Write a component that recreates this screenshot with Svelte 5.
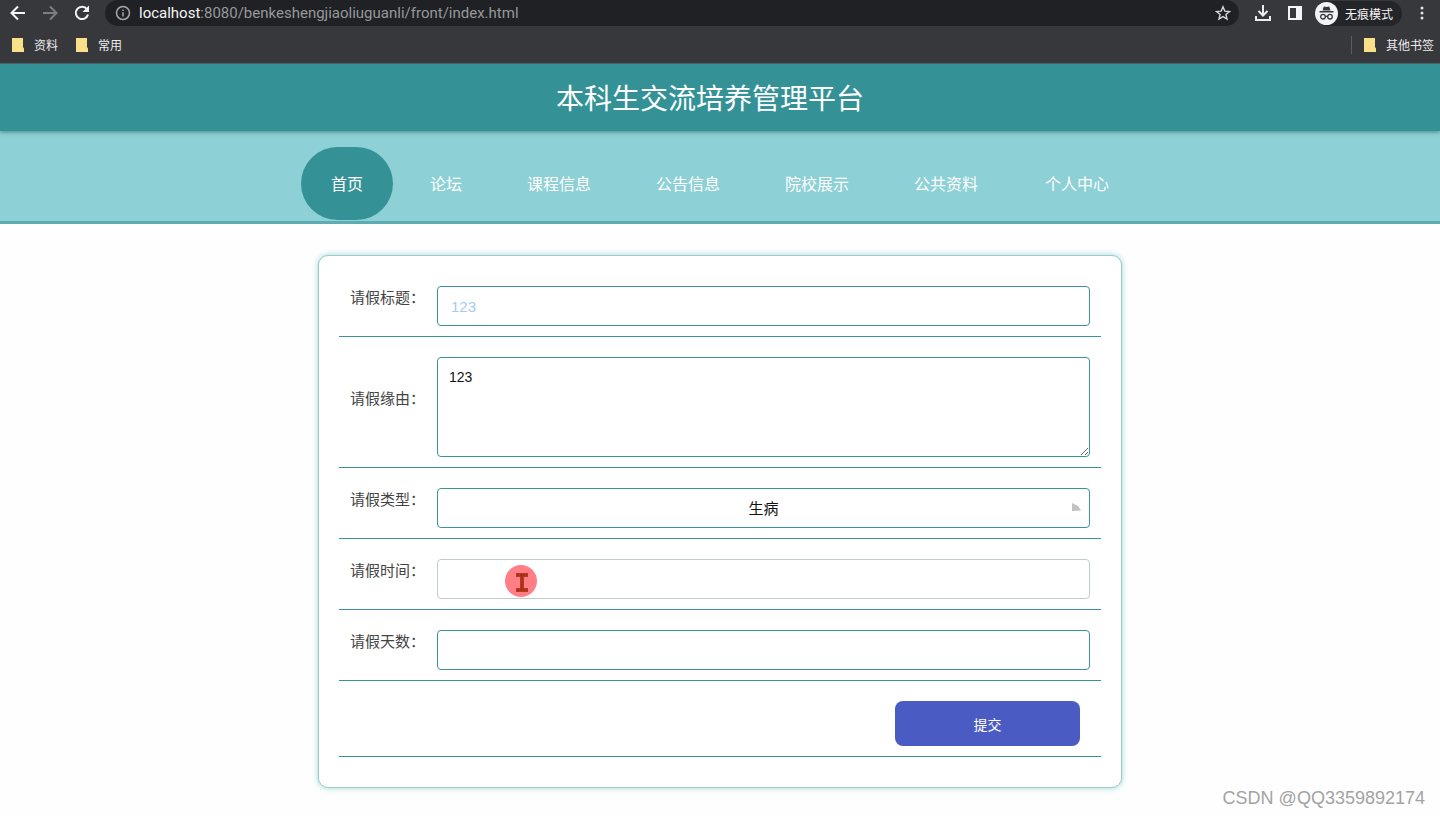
<script lang="ts">
    const menu = [
        { name: '首页', href: '#index' },
        { name: '论坛', href: '#forum' },
        { name: '课程信息', href: '#kecheng' },
        { name: '公告信息', href: '#gonggao' },
        { name: '院校展示', href: '#yuanxiao' },
        { name: '公共资料', href: '#ziliao' },
        { name: '个人中心', href: '#center' }
    ];

    let active = $state('首页');
    let biaoti = $state('123');
    let yuanyou = $state('123');
    let leixing = $state('生病');
    let shijian = $state('');
    let tianshu = $state('');

    function submitForm(event: Event) {
        event.preventDefault();
        console.log({ biaoti, yuanyou, leixing, shijian, tianshu });
    }
</script>

{#snippet folder()}
    <svg class="folder" width="12" height="14" viewBox="0 0 12 14">
        <path d="M0 0H11V9L12 10.500V14H0Z" fill="#fbe08a" />
    </svg>
{/snippet}

<div id="page">
    <div class="toolbar">
        <button class="tool" aria-label="back">
            <svg width="18" height="18" viewBox="0 0 18 18" fill="none" stroke="#f4f5f6" stroke-width="2">
                <path d="M16 9H3M9 2.500L2.500 9L9 15.500" />
            </svg>
        </button>
        <button class="tool" aria-label="forward">
            <svg width="18" height="18" viewBox="0 0 18 18" fill="none" stroke="#7d7e81" stroke-width="2">
                <path d="M2 9H15M9 2.500L15.500 9L9 15.500" />
            </svg>
        </button>
        <button class="tool" aria-label="reload">
            <svg width="18" height="18" viewBox="0 0 18 18">
                <path d="M14 5.200A6.200 6.200 0 1 0 15 10.500" fill="none" stroke="#f4f5f6" stroke-width="2" />
                <path d="M16 1.500V8H9.500Z" fill="#f4f5f6" />
            </svg>
        </button>
        <div class="address">
            <svg width="16" height="16" viewBox="0 0 16 16" fill="none" stroke="#a6a8ab" stroke-width="1.500">
                <circle cx="8" cy="8" r="6.500" />
                <path d="M8 7.200V11.500M8 4.400V6" />
            </svg>
            <span class="url"><b>localhost</b>:8080/benkeshengjiaoliuguanli/front/index.html</span>
            <button class="tool star" aria-label="bookmark">
                <svg width="16" height="16" viewBox="0 0 16 16" fill="none" stroke="#d5d6d8" stroke-width="1.400">
                    <path d="M8 1.800L9.800 6.100L14.500 6.500L10.900 9.500L12 14L8 11.600L4 14L5.100 9.500L1.500 6.500L6.200 6.100Z" />
                </svg>
            </button>
        </div>
        <button class="tool" aria-label="downloads">
            <svg width="18" height="18" viewBox="0 0 18 18" fill="none" stroke="#eceded" stroke-width="2">
                <path d="M9 1V11M4.500 7L9 11.500L13.500 7M2 12V16H16V12" />
            </svg>
        </button>
        <button class="tool" aria-label="side panel">
            <svg width="16" height="16" viewBox="0 0 16 16">
                <path d="M2 2H14V14H2Z" fill="none" stroke="#f4f5f6" stroke-width="2" />
                <path d="M9 2H14V14H9Z" fill="#f4f5f6" />
            </svg>
        </button>
        <button class="incognito">
            <svg width="23" height="23" viewBox="0 0 23 23">
                <circle cx="11.500" cy="11.500" r="11.500" fill="#f2f3f4" />
                <path d="M7.500 8.500L8.800 4.500L11.500 5.100L14.200 4.500L15.500 8.500ZM4.500 9H18.500V10.500H4.500Z" fill="#35363a" />
                <g fill="none" stroke="#35363a" stroke-width="1.300">
                    <circle cx="8" cy="14.700" r="2.300" />
                    <circle cx="15" cy="14.700" r="2.300" />
                    <path d="M10.300 14.300H12.700" />
                </g>
            </svg>
            无痕模式
        </button>
        <button class="tool" aria-label="menu">
            <svg width="16" height="16" viewBox="0 0 16 16" fill="#e2e3e5">
                <circle cx="8" cy="3" r="1.500" />
                <circle cx="8" cy="8" r="1.500" />
                <circle cx="8" cy="13" r="1.500" />
            </svg>
        </button>
    </div>
    <div class="bookmarks">
        <a href="#ziliao">{@render folder()}资料</a>
        <a href="#changyong">{@render folder()}常用</a>
        <a class="other" href="#other">{@render folder()}其他书签</a>
    </div>

    <header>
        <h1>本科生交流培养管理平台</h1>
    </header>

    <nav>
        {#each menu as item}
            <a href={item.href} class:active={active === item.name} onclick={() => (active = item.name)}>{item.name}</a>
        {/each}
    </nav>

    <form onsubmit={submitForm}>
        <div class="row">
            <label for="biaoti">请假标题：</label>
            <input id="biaoti" class="field title" type="text" bind:value={biaoti} />
        </div>
        <div class="row">
            <label for="yuanyou">请假缘由：</label>
            <textarea id="yuanyou" class="field" bind:value={yuanyou}></textarea>
        </div>
        <div class="row">
            <label for="leixing">请假类型：</label>
            <div class="wrap">
                <select id="leixing" class="field" bind:value={leixing}>
                    <option>生病</option>
                    <option>事假</option>
                </select>
                <svg class="arrow" width="9" height="8" viewBox="0 0 9 8">
                    <path d="M0 0L6 3L9 7.500L0 8Z" fill="#c3c0c3" />
                </svg>
            </div>
        </div>
        <div class="row">
            <label for="shijian">请假时间：</label>
            <div class="wrap">
                <input id="shijian" class="field time" type="text" bind:value={shijian} />
                <svg class="pointer" width="32" height="32" viewBox="0 0 32 32">
                    <circle cx="16" cy="16" r="16" fill="#ff7f84" />
                    <path d="M11 8H23V12H19V23H23V27H11V23H15V12H11Z" fill="#b8391f" />
                    <path d="M12 10H22M12 25H22M17 10V25" stroke="#8a2a16" stroke-width="1" stroke-dasharray="2 1" />
                </svg>
            </div>
        </div>
        <div class="row">
            <label for="tianshu">请假天数：</label>
            <input id="tianshu" class="field" type="text" bind:value={tianshu} />
        </div>
        <div class="row buttons">
            <button class="submit" type="submit">提交</button>
        </div>
    </form>

    <div class="watermark">CSDN @QQ3359892174</div>
</div>

<style>
    :global(body) {
        margin: 0;
    }

    #page {
        position: relative;
        box-sizing: border-box;
        min-height: 100vh;
        padding-bottom: 28px;
        background: #fefefe;
        font-family: "Noto Sans CJK SC", sans-serif;
    }

    button {
        border: none;
        background: none;
        padding: 0;
        font-family: inherit;
        cursor: pointer;
    }

    a {
        text-decoration: none;
    }

    svg {
        display: block;
        flex: none;
    }

    .toolbar {
        display: flex;
        align-items: center;
        height: 26px;
        padding: 0 2px;
        background: #37383b;
    }

    .tool {
        display: flex;
        justify-content: center;
        width: 32px;
    }

    .address {
        flex: 1;
        display: flex;
        align-items: center;
        gap: 8px;
        height: 26px;
        margin: 0 8px 0 7px;
        padding-left: 10px;
        border-radius: 13px;
        background: #202124;
        color: #96989b;
        font-family: Roboto, "Open Sans", sans-serif;
        font-size: 15px;
        line-height: 24px;
        white-space: nowrap;
    }

    .url {
        flex: 1;
    }

    .url b {
        color: #f4f5f6;
        font-weight: normal;
    }

    .incognito {
        display: flex;
        align-items: center;
        gap: 7px;
        height: 25px;
        margin: 0 4px;
        padding-right: 9px;
        border-radius: 13px;
        background: #242528;
        color: #f4f5f6;
        font-size: 12px;
    }

    .bookmarks {
        display: flex;
        align-items: center;
        gap: 18px;
        height: 37px;
        padding: 0 6px 0 12px;
        background: #37383b;
        border-bottom: 1px solid #4c6467;
    }

    .bookmarks a {
        display: flex;
        align-items: center;
        gap: 10px;
        color: #eceded;
        font-size: 12px;
        line-height: 18px;
    }

    .bookmarks .other {
        margin-left: auto;
        padding-left: 12px;
        border-left: 1px solid #5c5d61;
    }

    header {
        position: relative;
        padding: 12px 20px 12px 0;
        background: #349297;
        box-shadow: 0 1px 4px rgba(40, 100, 100, 0.7);
    }

    h1 {
        margin: 0;
        color: #fff;
        font-size: 28px;
        font-weight: normal;
        line-height: 43px;
        text-align: center;
    }

    nav {
        display: flex;
        justify-content: center;
        gap: 5px;
        padding: 16px 0 1px;
        background: #8dd0d6;
        border-bottom: 3px solid #5fabb2;
    }

    nav a {
        padding: 0 30px;
        border-radius: 40px;
        color: #fff;
        font-size: 16px;
        line-height: 73px;
    }

    nav a:first-child {
        margin-right: 2px;
    }

    nav a:last-child {
        margin-left: 2px;
    }

    nav a.active {
        background: #349297;
    }

    form {
        box-sizing: border-box;
        max-width: 804px;
        margin: 31px auto 0;
        padding: 20px;
        border: 1px solid #98cdcd;
        border-radius: 10px;
        background: #fff;
        box-shadow: 0 0 6px #9fd6d6;
    }

    .row {
        display: flex;
        align-items: center;
        margin-bottom: 10px;
        padding: 10px 11px;
        border-bottom: 1px solid #3d9295;
    }

    label {
        width: 87px;
        padding-bottom: 18px;
        color: #444;
        font-size: 15px;
        line-height: 22px;
    }

    .wrap {
        position: relative;
        flex: 1;
        display: flex;
    }

    .field {
        flex: 1;
        box-sizing: border-box;
        min-width: 0;
        height: 40px;
        padding: 0 12px;
        border: 1px solid #3d9295;
        border-radius: 4px;
        background: #fff;
        color: #111;
        font-family: "Liberation Sans", "Noto Sans CJK SC", sans-serif;
        font-size: 14px;
        outline: none;
    }

    .title {
        padding: 0 13px;
        color: #a3cdee;
        font-size: 15px;
    }

    textarea.field {
        height: 100px;
        padding: 11px;
    }

    select.field {
        appearance: none;
        font-size: 15px;
        text-align: center;
        text-align-last: center;
    }

    .time {
        border-color: #c2cbcb;
    }

    .arrow {
        position: absolute;
        top: 15px;
        right: 9px;
        pointer-events: none;
    }

    .pointer {
        position: absolute;
        top: 6px;
        left: 68px;
        pointer-events: none;
    }

    .buttons {
        justify-content: flex-end;
    }

    .submit {
        width: 185px;
        height: 45px;
        margin-right: 10px;
        border-radius: 8px;
        background: #4a5bc4;
        color: #fff;
        font-size: 14px;
    }

    .watermark {
        position: absolute;
        right: 15px;
        bottom: 7px;
        color: #a3a3a3;
        font-family: "Liberation Sans", sans-serif;
        font-size: 18px;
        line-height: 22px;
    }
</style>
